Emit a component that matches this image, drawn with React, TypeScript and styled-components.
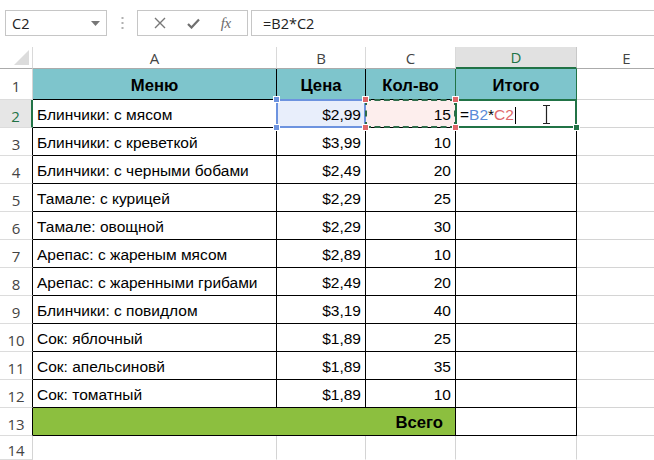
import React from "react";
import styled, { createGlobalStyle, css } from "styled-components";

const Global = createGlobalStyle`
  html, body { margin: 0; padding: 0; background: #ffffff; }
  body { width: 654px; height: 460px; overflow: hidden; font-family: "Liberation Sans", Arial, sans-serif; }
  * { box-sizing: border-box; }
`;

const Page = styled.div`
  width: 654px;
  height: 460px;
  overflow: hidden;
  background: #fff;
`;

const FormulaBar = styled.div`
  height: 47px;
  display: flex;
  align-items: flex-start;
  padding: 10px 0 0 5px;
`;

const NameBox = styled.div`
  width: 102px;
  height: 26px;
  border: 1px solid #c6c6c6;
  display: flex;
  align-items: center;
  justify-content: space-between;
  padding: 0 6px 0 6px;
  font-family: "Open Sans", "Noto Sans", sans-serif;
  font-size: 14.5px;
  color: #222;
`;

const Dots = styled.div`
  width: 30px;
  height: 26px;
  display: flex;
  align-items: center;
  justify-content: center;
`;

const ButtonGroup = styled.div`
  width: 111px;
  height: 26px;
  border: 1px solid #c6c6c6;
  display: flex;
  align-items: center;
  justify-content: space-around;
  padding: 0 6px;
`;

const FormulaInput = styled.div`
  flex: 1;
  height: 26px;
  margin-left: 3px;
  border: 1px solid #c6c6c6;
  border-right: none;
  display: flex;
  align-items: center;
  padding-left: 11px;
  font-family: "Open Sans", "Noto Sans", sans-serif;
  font-size: 14.5px;
  color: #222;
`;

const Fx = styled.span`
  font-family: "Liberation Serif", "Times New Roman", serif;
  font-style: italic;
  font-size: 15px;
  color: #6b6b6b;
  letter-spacing: -0.5px;
`;

const Sheet = styled.div`
  display: grid;
  grid-template-columns: 33px 244px 89px 90px 121px 100px;
  grid-template-rows: 22px 31px repeat(12, 28px) 24px;
  width: 677px;
`;

const ColHead = styled.div<{ $active?: boolean }>`
  border-right: 1px solid #d9d9d9;
  border-bottom: 1px solid #ababab;
  display: flex;
  align-items: center;
  justify-content: center;
  font-family: "Open Sans", "Noto Sans", sans-serif;
  font-size: 15px;
  color: #444;
  ${(p) =>
    p.$active &&
    css`
      background: #e1e1e1;
      color: #217346;
      border-bottom: 2px solid #217346;
      border-right-color: #c8c8c8;
    `}
`;

const Corner = styled.div`
  border-right: 1px solid #d9d9d9;
  border-bottom: 1px solid #ababab;
  position: relative;
`;

const CornerTri = styled.div`
  position: absolute;
  right: 3px;
  bottom: 3px;
  width: 0;
  height: 0;
  border-left: 15px solid transparent;
  border-bottom: 15px solid #dcdcdc;
`;

const RowHead = styled.div<{ $active?: boolean; $edge?: string }>`
  border-right: 1px solid ${(p) => p.$edge || "#d4d4d4"};
  border-bottom: 1px solid #dcdcdc;
  display: flex;
  align-items: center;
  justify-content: center;
  padding-top: 4px;
  font-family: "Open Sans", "Noto Sans", sans-serif;
  font-size: 15px;
  color: #444;
  ${(p) =>
    p.$active &&
    css`
      background: #e6e6e6;
      color: #217346;
      border-right: 2px solid #217346;
    `}
`;

const Cell = styled.div<{
  $bg?: string;
  $align?: "left" | "right" | "center";
  $bold?: boolean;
  $r?: string;
  $b?: string;
  $span?: number;
  $pr?: number;
}>`
  position: relative;
  background: ${(p) => p.$bg || "transparent"};
  border-right: 1px solid ${(p) => p.$r || "#d4d4d4"};
  border-bottom: 1px solid ${(p) => p.$b || "#d4d4d4"};
  display: flex;
  align-items: center;
  justify-content: ${(p) =>
    p.$align === "right" ? "flex-end" : p.$align === "center" ? "center" : "flex-start"};
  padding: 3px ${(p) => (p.$pr !== undefined ? p.$pr : 4)}px 0 4px;
  font-size: ${(p) => (p.$bold ? "16.7px" : "15.5px")};
  font-weight: ${(p) => (p.$bold ? 700 : 400)};
  color: #000;
  white-space: nowrap;
  ${(p) => p.$span && css`grid-column: span ${p.$span};`}
`;

const SelBox = styled.div<{ $color: string; $dashed?: boolean; $w?: number }>`
  position: absolute;
  left: -1px;
  top: -1px;
  right: -1px;
  bottom: -1px;
  border: ${(p) => p.$w || 2}px ${(p) => (p.$dashed ? "dashed" : "solid")} ${(p) => p.$color};
  pointer-events: none;
`;

const Handle = styled.div<{ $color: string; $x: "l" | "r"; $y: "t" | "b" }>`
  position: absolute;
  width: 5px;
  height: 5px;
  background: ${(p) => p.$color};
  border: 1px solid #fff;
  box-sizing: content-box;
  ${(p) => (p.$x === "l" ? "left: -4px;" : "right: -4px;")}
  ${(p) => (p.$y === "t" ? "top: -4px;" : "bottom: -4px;")}
  z-index: 2;
`;

const Ref = styled.span<{ $c: string }>`
  color: ${(p) => p.$c};
`;

const Caret = styled.span`
  display: inline-block;
  width: 1px;
  height: 17px;
  background: #000;
  margin-left: 1px;
  vertical-align: middle;
`;

const IBeam = styled.svg`
  position: absolute;
  left: 86px;
  top: 5px;
`;

const TEAL = "#7ec5cc";
const GREEN = "#8cbf3f";
const XL = "#217346";

const items: [string, string, string][] = [
  ["Блинчики: с креветкой", "$3,99", "10"],
  ["Блинчики: с черными бобами", "$2,49", "20"],
  ["Тамале: с курицей", "$2,29", "25"],
  ["Тамале: овощной", "$2,29", "30"],
  ["Арепас: с жареным мясом", "$2,89", "10"],
  ["Арепас: с жаренными грибами", "$2,49", "20"],
  ["Блинчики: с повидлом", "$3,19", "40"],
  ["Сок: яблочный", "$1,89", "25"],
  ["Сок: апельсиновй", "$1,89", "35"],
  ["Сок: томатный", "$1,89", "10"],
];

export default function App() {
  return (
    <Page>
      <Global />
      <FormulaBar>
        <NameBox>
          <span>C2</span>
          <svg width="9" height="5" viewBox="0 0 9 5">
            <path d="M0 0 L9 0 L4.5 5 Z" fill="#777" />
          </svg>
        </NameBox>
        <Dots>
          <svg width="3" height="12" viewBox="0 0 3 12">
            <rect x="0.5" y="0" width="2" height="2" fill="#b0b0b0" />
            <rect x="0.5" y="5" width="2" height="2" fill="#b0b0b0" />
            <rect x="0.5" y="10" width="2" height="2" fill="#b0b0b0" />
          </svg>
        </Dots>
        <ButtonGroup>
          <svg width="12" height="12" viewBox="0 0 12 12">
            <path d="M1 1 L11 11 M11 1 L1 11" stroke="#777" strokeWidth="1.4" />
          </svg>
          <svg width="13" height="11" viewBox="0 0 13 11">
            <path d="M1 6 L4.5 9.5 L12 1.5" stroke="#6f6f6f" strokeWidth="2.2" fill="none" />
          </svg>
          <Fx>fx</Fx>
        </ButtonGroup>
        <FormulaInput>=B2*C2</FormulaInput>
      </FormulaBar>

      <Sheet>
        <Corner>
          <CornerTri />
        </Corner>
        <ColHead>A</ColHead>
        <ColHead>B</ColHead>
        <ColHead>C</ColHead>
        <ColHead $active>D</ColHead>
        <ColHead>E</ColHead>

        <RowHead>1</RowHead>
        <Cell $bg={TEAL} $align="center" $bold $r="#000" $b="#000">Меню</Cell>
        <Cell $bg={TEAL} $align="center" $bold $r="#000" $b="#000">Цена</Cell>
        <Cell $bg={TEAL} $align="center" $bold $r={XL} $b="#000">Кол-во</Cell>
        <Cell $bg={TEAL} $align="center" $bold $r={XL} $b={XL}>Итого</Cell>
        <Cell />

        <RowHead $active>2</RowHead>
        <Cell $r="#000" $b="#000">Блинчики: с мясом</Cell>
        <Cell $bg="#e8eefb" $align="right" $r="#000" $b="#000">
          $2,99
          <SelBox $color="#6d93df" />
          <Handle $color="#6d93df" $x="l" $y="t" />
          <Handle $color="#6d93df" $x="l" $y="b" />
        </Cell>
        <Cell $bg="#fdeeed" $align="right" $r="#000" $b="#000">
          15
          <SelBox $color="#2e6b4a" $dashed />
          <Handle $color="#e0686a" $x="l" $y="t" />
          <Handle $color="#e0686a" $x="l" $y="b" />
          <Handle $color="#e0686a" $x="r" $y="t" />
          <Handle $color="#e0686a" $x="r" $y="b" />
        </Cell>
        <Cell $r="#000" $b="#000">
          <span>
            =<Ref $c="#5b8bd8">B2</Ref>*<Ref $c="#e0686a">C2</Ref>
          </span>
          <Caret />
          <SelBox $color={XL} />
          <Handle $color={XL} $x="r" $y="b" />
          <IBeam width="9" height="19" viewBox="0 0 9 19">
            <path d="M1 0.5 H8 M4.5 0.5 V18.5 M1 18.5 H8" stroke="#222" strokeWidth="1.2" fill="none" />
          </IBeam>
        </Cell>
        <Cell />

        {items.map(([name, price, qty], i) => (
          <React.Fragment key={i}>
            <RowHead $edge="#000">{i + 3}</RowHead>
            <Cell $r="#000" $b="#000">{name}</Cell>
            <Cell $align="right" $r="#000" $b="#000">{price}</Cell>
            <Cell $align="right" $r="#000" $b="#000">{qty}</Cell>
            <Cell $r="#000" $b="#000" />
            <Cell />
          </React.Fragment>
        ))}

        <RowHead $edge="#000">13</RowHead>
        <Cell $span={3} $bg={GREEN} $align="right" $bold $r="#000" $b="#000" $pr={12}>Всего</Cell>
        <Cell $r="#000" $b="#000" />
        <Cell />

        <RowHead>14</RowHead>
        <Cell $b="transparent" />
        <Cell $b="transparent" />
        <Cell $b="transparent" />
        <Cell $b="transparent" />
        <Cell $b="transparent" />
      </Sheet>
    </Page>
  );
}
